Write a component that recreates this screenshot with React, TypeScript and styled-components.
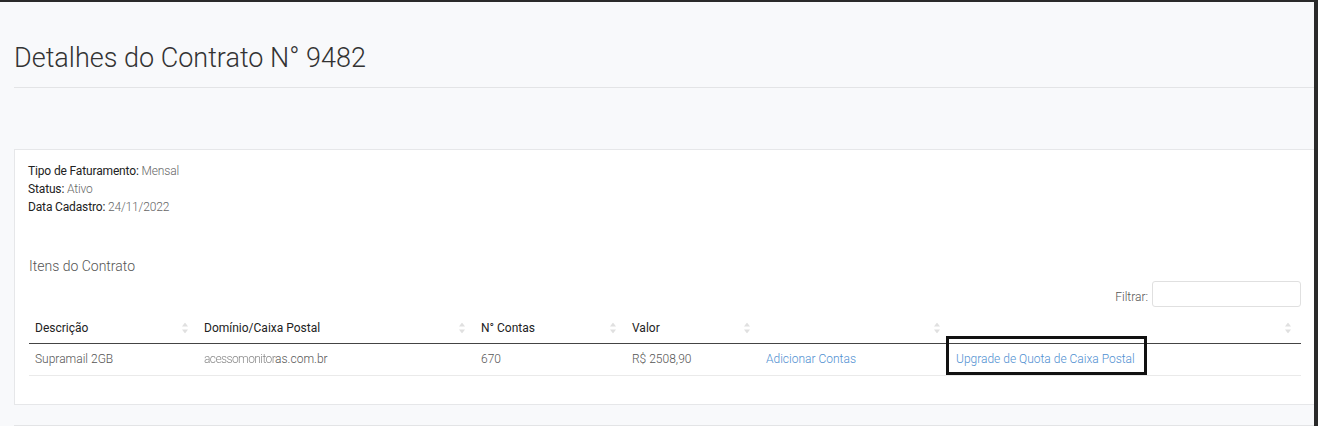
import styled, { createGlobalStyle } from 'styled-components';

const GlobalStyle = createGlobalStyle`
    html, body {
        margin: 0;
        padding: 0;
        background: #f8f9fb;
    }
    * {
        box-sizing: border-box;
    }
`;

type Column = { label: string; width: number };

const columns: Column[] = [
    { label: 'Descrição', width: 169 },
    { label: 'Domínio/Caixa Postal', width: 277 },
    { label: 'N° Contas', width: 151 },
    { label: 'Valor', width: 134 },
    { label: '', width: 190 },
    { label: '', width: 351 },
];

function SortIcon() {
    return (
        <SortMark width="6" height="11" viewBox="0 0 6 11">
            <path d="M3 0 L6 4 L0 4 Z" fill="#e0e0e0" />
            <path d="M3 11 L6 7 L0 7 Z" fill="#e0e0e0" />
        </SortMark>
    );
}

export default function App() {
    return (
        <>
            <GlobalStyle />
            <Frame>
                <Header>
                    <Title>Detalhes do Contrato N° 9482</Title>
                </Header>

                <Card>
                    <InfoList>
                        <InfoLine><strong>Tipo de Faturamento:</strong> Mensal</InfoLine>
                        <InfoLine><strong>Status:</strong> Ativo</InfoLine>
                        <InfoLine><strong>Data Cadastro:</strong> 24/11/2022</InfoLine>
                    </InfoList>

                    <SectionTitle>Itens do Contrato</SectionTitle>

                    <FilterRow>
                        <FilterLabel>Filtrar:</FilterLabel>
                        <FilterInput type="search" />
                    </FilterRow>

                    <Table>
                        <colgroup>
                            {columns.map((c, i) => (
                                <col key={i} style={{ width: c.width }} />
                            ))}
                        </colgroup>
                        <thead>
                            <tr>
                                {columns.map((c, i) => (
                                    <Th key={i}>
                                        {c.label}
                                        <SortIcon />
                                    </Th>
                                ))}
                            </tr>
                        </thead>
                        <tbody>
                            <tr>
                                <Td>Supramail 2GB</Td>
                                <Td>
                                    <Masked>acessomonitor</Masked>as.com.br
                                </Td>
                                <Td>670</Td>
                                <Td>R$ 2508,90</Td>
                                <Td><ActionLink href="#">Adicionar Contas</ActionLink></Td>
                                <Td>
                                    <Marked>
                                        <ActionLink href="#">Upgrade de Quota de Caixa Postal</ActionLink>
                                        <Highlight />
                                    </Marked>
                                </Td>
                            </tr>
                        </tbody>
                    </Table>
                </Card>

                <Footer />
            </Frame>
        </>
    );
}

const Frame = styled.div`
    width: 1318px;
    height: 426px;
    overflow: hidden;
    background: #f8f9fb;
    border-top: 2px solid #2a2a2a;
    border-right: 4px solid #2a2a2a;
    padding-left: 14px;
    font-family: Roboto, 'Liberation Sans', sans-serif;
    color: #333;
`;

const Header = styled.div`
    padding-top: 40px;
    padding-bottom: 13px;
    border-bottom: 1px solid #e3e4e6;
`;

const Title = styled.h1`
    margin: 0;
    font-size: 27px;
    line-height: 32px;
    font-weight: 300;
    color: #333;
`;

const Card = styled.div`
    margin-top: 61px;
    background: #fff;
    border: 1px solid #e6e7e9;
    border-right: none;
    height: 256px;
    padding: 12px 13px 0 13px;
`;

const InfoList = styled.div`
    display: flex;
    flex-direction: column;
`;

const InfoLine = styled.div`
    font-size: 12px;
    line-height: 18px;
    color: #666;
    font-weight: 300;
    letter-spacing: -0.15px;

    strong {
        font-weight: 400;
        color: #222;
    }
`;

const SectionTitle = styled.div`
    margin-top: 40px;
    padding-left: 1px;
    font-size: 14px;
    line-height: 20px;
    font-weight: 300;
    color: #555;
`;

const FilterRow = styled.div`
    display: flex;
    justify-content: flex-end;
    align-items: center;
    gap: 4px;
    margin-top: 5px;
`;

const FilterLabel = styled.label`
    font-size: 12px;
    font-weight: 300;
    color: #555;
    padding-top: 6px;
`;

const FilterInput = styled.input`
    width: 149px;
    height: 26px;
    border: 1px solid #e0e0e0;
    border-radius: 3px;
    background: #fff;
    outline: none;
`;

const Table = styled.table`
    width: 1272px;
    margin-top: 6px;
    margin-left: 1px;
    border-collapse: collapse;
    table-layout: fixed;
`;

const Th = styled.th`
    position: relative;
    height: 30px;
    padding: 0 6px;
    text-align: left;
    font-size: 12px;
    font-weight: 400;
    color: #222;
    border-bottom: 1px solid #444;
`;

const SortMark = styled.svg`
    position: absolute;
    right: 10px;
    top: 50%;
    transform: translateY(-50%);
`;

const Td = styled.td`
    height: 32px;
    padding: 0 6px;
    font-size: 12px;
    font-weight: 300;
    color: #555;
    border-bottom: 1px solid #eaeaea;
    white-space: nowrap;
`;

const Masked = styled.span`
    filter: blur(0.7px);
    color: #888;
    letter-spacing: -0.6px;
`;

const ActionLink = styled.a`
    color: #4f8fd1;
    text-decoration: none;
    font-weight: 300;
`;

const Marked = styled.span`
    position: relative;
    display: inline-block;
`;

const Highlight = styled.span`
    position: absolute;
    left: -10px;
    right: -12px;
    top: -16px;
    bottom: -9px;
    border: 3px solid #111;
    pointer-events: none;
`;

const Footer = styled.div`
    margin-top: 20px;
    border-top: 1px solid #e3e4e6;
`;
